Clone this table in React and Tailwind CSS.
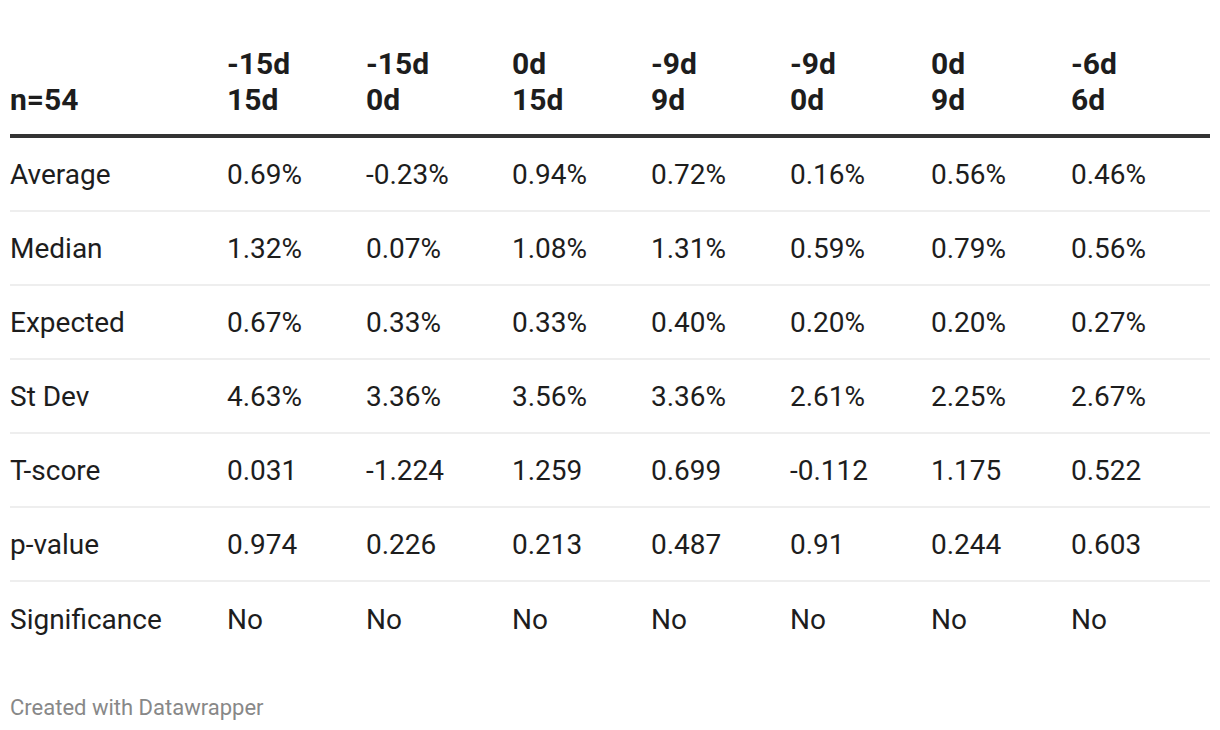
import React from "react";

const headers = [
  ["", "n=54"],
  ["-15d", "15d"],
  ["-15d", "0d"],
  ["0d", "15d"],
  ["-9d", "9d"],
  ["-9d", "0d"],
  ["0d", "9d"],
  ["-6d", "6d"],
];

const rows = [
  ["Average", "0.69%", "-0.23%", "0.94%", "0.72%", "0.16%", "0.56%", "0.46%"],
  ["Median", "1.32%", "0.07%", "1.08%", "1.31%", "0.59%", "0.79%", "0.56%"],
  ["Expected", "0.67%", "0.33%", "0.33%", "0.40%", "0.20%", "0.20%", "0.27%"],
  ["St Dev", "4.63%", "3.36%", "3.56%", "3.36%", "2.61%", "2.25%", "2.67%"],
  ["T-score", "0.031", "-1.224", "1.259", "0.699", "-0.112", "1.175", "0.522"],
  ["p-value", "0.974", "0.226", "0.213", "0.487", "0.91", "0.244", "0.603"],
  ["Significance", "No", "No", "No", "No", "No", "No", "No"],
];

const cols =
  "grid grid-cols-[217px_139px_146px_139px_139px_141px_140px_1fr]";

export default function App() {
  return (
    <div
      className="w-[1220px] h-[730px] bg-white text-[#1d1d1d] px-[10px] pt-[46px]"
      style={{ fontFamily: "Roboto, 'Liberation Sans', sans-serif" }}
    >
      {/* Header */}
      <div
        className={`${cols} font-bold text-[30px] leading-[36px] pb-[16px] border-b-4 border-[#333333]`}
      >
        {headers.map((h, i) => (
          <div key={i}>
            <div>{h[0] || "\u00a0"}</div>
            <div>{h[1]}</div>
          </div>
        ))}
      </div>

      {/* Body */}
      <div>
        {rows.map((row, ri) => (
          <div
            key={ri}
            className={`${cols} h-[74px] items-center text-[28px] pt-[1px] ${
              ri < rows.length - 1 ? "border-b-2 border-[#eeeeee]" : ""
            }`}
          >
            {row.map((cell, ci) => (
              <div key={ci}>{cell}</div>
            ))}
          </div>
        ))}
      </div>

      {/* Footer */}
      <div className="mt-[35px] text-[22px] text-[#888888]">
        Created with Datawrapper
      </div>
    </div>
  );
}
